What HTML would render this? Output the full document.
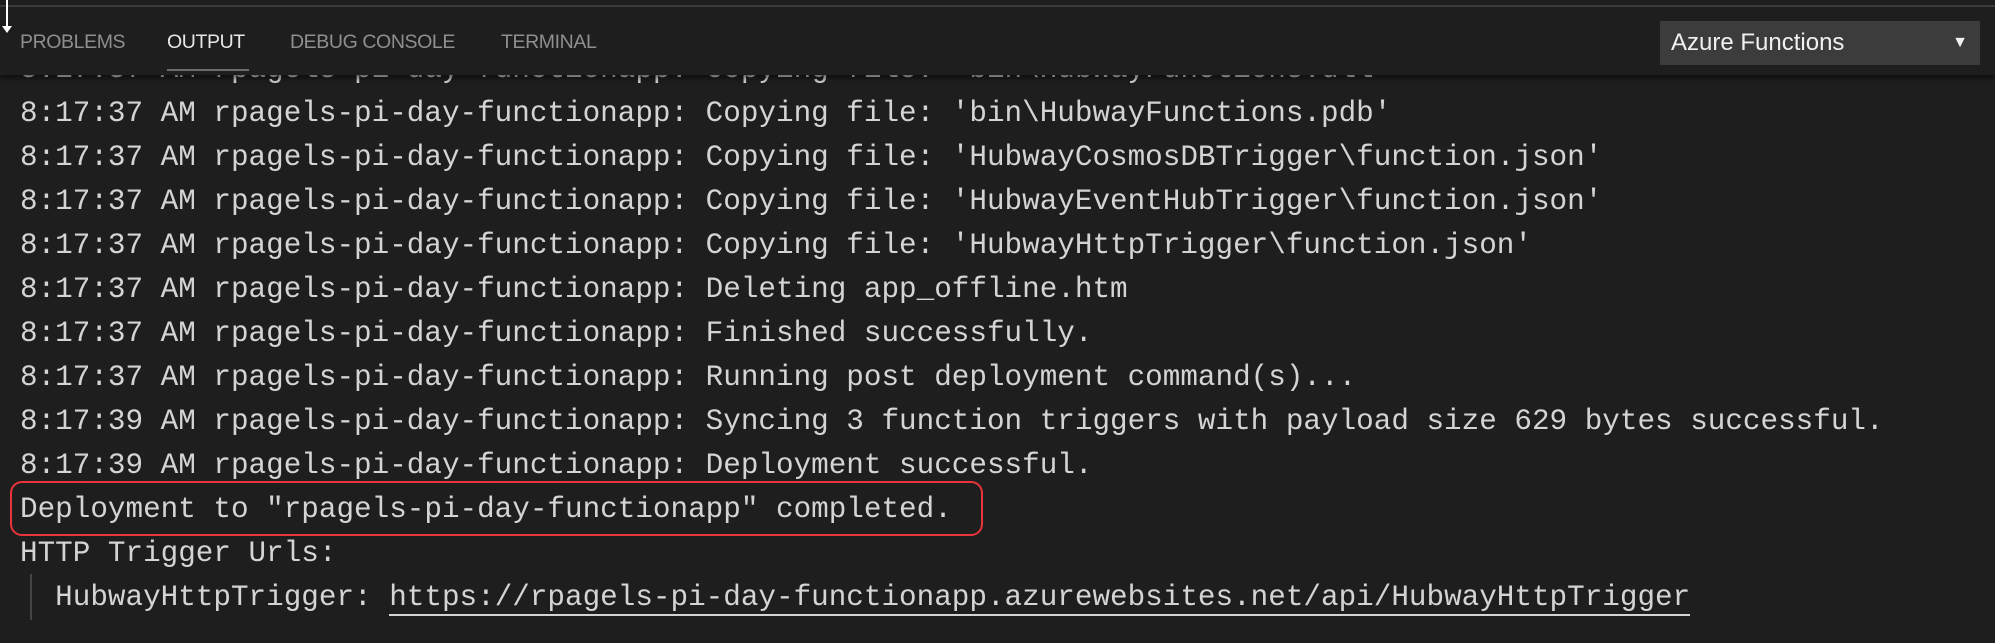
<!DOCTYPE html>
<html><head><meta charset="utf-8"><style>
html,body{margin:0;padding:0;background:#1e1e1e;width:1995px;height:643px;overflow:hidden}
.out{position:absolute;left:20px;top:48px;font-family:"Liberation Mono",monospace;font-size:29.3px;line-height:44px;color:#d4d4d4;white-space:pre}
.hdr{position:absolute;left:0;top:0;width:1995px;height:75px;background:#1e1e1e;box-shadow:0 3px 6px rgba(0,0,0,.6);z-index:2}
.topline{position:absolute;left:0;top:5px;width:1995px;height:2px;background:#3a3a3a}
.tab{position:absolute;top:31px;font-family:"Liberation Sans",sans-serif;font-size:19.5px;color:#8f8f8f;letter-spacing:-0.4px}
.sel{color:#e7e7e7}
.ul{position:absolute;left:167px;top:69px;width:82px;height:2px;background:#6a6a6a}
.dd{position:absolute;left:1660px;top:21px;width:320px;height:44px;background:#3c3c3c;color:#f0f0f0;font-family:"Liberation Sans",sans-serif;font-size:24px;line-height:44px;box-sizing:border-box;padding-left:11px}
.arr{position:absolute;right:12px;top:0;font-size:16px}
.box{position:absolute;left:10px;top:481px;width:973px;height:55px;border:2px solid #e8343a;border-radius:12px;box-sizing:border-box}
.bar{position:absolute;left:30px;top:574px;width:2px;height:46px;background:#444}
u{text-decoration:none;border-bottom:2px solid #d4d4d4}
</style></head><body>
<div class="hdr">
<div class="topline"></div>
<div style="position:absolute;left:6px;top:0;width:2px;height:28px;background:#fff"></div>
<div style="position:absolute;left:2px;top:26px;width:0;height:0;border-left:5px solid transparent;border-right:5px solid transparent;border-top:7px solid #fff"></div>
<div class="tab" style="left:20px">PROBLEMS</div>
<div class="tab sel" style="left:167px">OUTPUT</div>
<div class="tab" style="left:290px">DEBUG CONSOLE</div>
<div class="tab" style="left:501px">TERMINAL</div>
<div class="ul"></div>
<div class="dd">Azure Functions<span class="arr">▼</span></div>
</div>
<div class="out">8:17:37 AM rpagels-pi-day-functionapp: Copying file: 'bin\HubwayFunctions.dll'
8:17:37 AM rpagels-pi-day-functionapp: Copying file: 'bin\HubwayFunctions.pdb'
8:17:37 AM rpagels-pi-day-functionapp: Copying file: 'HubwayCosmosDBTrigger\function.json'
8:17:37 AM rpagels-pi-day-functionapp: Copying file: 'HubwayEventHubTrigger\function.json'
8:17:37 AM rpagels-pi-day-functionapp: Copying file: 'HubwayHttpTrigger\function.json'
8:17:37 AM rpagels-pi-day-functionapp: Deleting app_offline.htm
8:17:37 AM rpagels-pi-day-functionapp: Finished successfully.
8:17:37 AM rpagels-pi-day-functionapp: Running post deployment command(s)...
8:17:39 AM rpagels-pi-day-functionapp: Syncing 3 function triggers with payload size 629 bytes successful.
8:17:39 AM rpagels-pi-day-functionapp: Deployment successful.
Deployment to "rpagels-pi-day-functionapp" completed.
HTTP Trigger Urls:
  HubwayHttpTrigger: <u>https://rpagels-pi-day-functionapp.azurewebsites.net/api/HubwayHttpTrigger</u></div>
<div class="box"></div>
<div class="bar"></div>
</body></html>
